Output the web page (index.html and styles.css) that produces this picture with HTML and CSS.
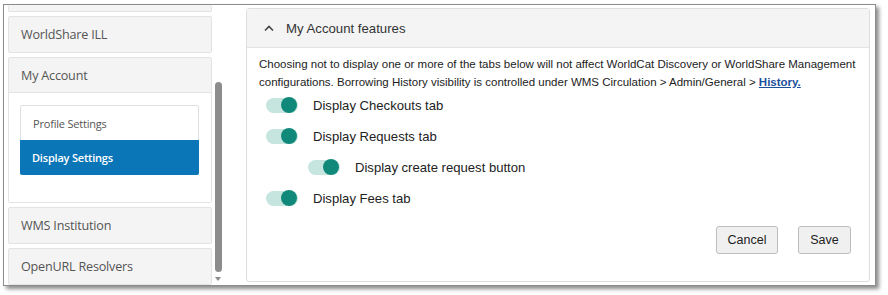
FILE: index.html
```html
<!DOCTYPE html>
<html>
<head>
<meta charset="utf-8">
<link rel="stylesheet" href="styles.css">
</head>
<body>
<div class="frame">
  <div class="sidebar">
    <div class="panels">
      <div class="panel panel-top"></div>
      <div class="panel"><div class="panel-head">WorldShare ILL</div></div>
      <div class="panel open">
        <div class="panel-head">My Account</div>
        <div class="panel-body">
          <div class="subnav">
            <div class="subitem">Profile Settings</div>
            <div class="subitem active">Display Settings</div>
          </div>
        </div>
      </div>
      <div class="panel"><div class="panel-head">WMS Institution</div></div>
      <div class="panel"><div class="panel-head">OpenURL Resolvers</div></div>
    </div>
    <div class="scrollbar">
      <div class="thumb"></div>
      <div class="arrow"></div>
    </div>
  </div>
  <div class="main">
    <div class="card">
      <div class="card-head">
        <svg class="chev" width="12" height="8" viewBox="0 0 12 8"><path d="M2 6.5 L6 2.5 L10 6.5" fill="none" stroke="#444" stroke-width="1.6"/></svg>
        <span class="card-title">My Account features</span>
      </div>
      <div class="card-body">
        <p class="desc">Choosing not to display one or more of the tabs below will not affect WorldCat Discovery or WorldShare Management configurations. Borrowing History visibility is controlled under WMS Circulation &gt; Admin/General &gt; <a class="link">History.</a></p>
        <div class="toggles">
          <div class="row"><span class="switch"><span class="knob"></span></span><span class="label">Display Checkouts tab</span></div>
          <div class="row"><span class="switch"><span class="knob"></span></span><span class="label">Display Requests tab</span></div>
          <div class="row sub"><span class="switch"><span class="knob"></span></span><span class="label">Display create request button</span></div>
          <div class="row"><span class="switch"><span class="knob"></span></span><span class="label">Display Fees tab</span></div>
        </div>
        <div class="actions">
          <button class="btn btn-cancel">Cancel</button>
          <button class="btn btn-save">Save</button>
        </div>
      </div>
    </div>
  </div>
</div>
</body>
</html>
```
FILE: styles.css
```css
* { box-sizing: border-box; }
html, body { margin: 0; padding: 0; background: #fff; }
body { width: 888px; height: 295px; overflow: hidden; }

.frame {
  margin: 4px 0 0 3px;
  width: 873px;
  height: 282px;
  border: 1px solid #8c8c8c;
  background: #fff;
  display: flex;
  overflow: hidden;
  box-shadow: 3px 3px 4px rgba(0,0,0,0.45);
}

.sidebar {
  width: 219px;
  display: flex;
  flex-shrink: 0;
}
.panels {
  width: 204px;
  margin-left: 4px;
  display: flex;
  flex-direction: column;
  gap: 4px;
  font-family: "Open Sans", "Noto Sans", sans-serif;
  color: #555;
}
.panel {
  background: #f4f4f4;
  border: 1px solid #e3e3e3;
  border-radius: 2px;
}
.panel-top { height: 8px; border-top: none; }
.panel-head {
  height: 35px;
  padding-left: 12px;
  display: flex;
  align-items: center;
  font-size: 12.6px;
  letter-spacing: -0.2px;
}
.panel.open .panel-head { border-bottom: 1px solid #e3e3e3; }
.panel-body {
  background: #fff;
  padding: 12px 12px 27px 11px;
}
.subnav {
  border: 1px solid #e0e0e0;
  border-radius: 2px;
}
.subitem {
  height: 34px;
  display: flex;
  align-items: center;
  padding-left: 12px;
  font-size: 11px;
  letter-spacing: -0.2px;
  color: #555;
}
.subitem.active {
  background: #0a76b7;
  color: #fff;
  font-weight: 600;
  height: 35px;
  margin: 0 -1px -1px -1px;
  border-radius: 0 0 2px 2px;
}

.scrollbar {
  width: 8px;
  margin-left: 2px;
  display: flex;
  flex-direction: column;
  align-items: center;
  padding-top: 77px;
}
.thumb {
  width: 7px;
  height: 190px;
  background: #8d8d8d;
  border-radius: 4px;
}
.arrow {
  margin-top: 5px;
  width: 0; height: 0;
  border-left: 3px solid transparent;
  border-right: 3px solid transparent;
  border-top: 4px solid #8d8d8d;
}

.main {
  flex: 1;
  padding: 3px 5px 3px 23px;
}
.card {
  height: 274px;
  border: 1px solid #dedede;
  border-radius: 3px;
  font-family: "Liberation Sans", Arial, sans-serif;
  color: #333;
  display: flex;
  flex-direction: column;
}
.card-head {
  height: 39px;
  background: #f4f4f4;
  border-bottom: 1px solid #e3e3e3;
  display: flex;
  align-items: center;
  padding-left: 16px;
  gap: 11px;
}
.chev { display: block; }
.card-title { font-size: 13.2px; color: #333; }
.card-body {
  padding: 7px 2px 0 12px;
  flex: 1;
  display: flex;
  flex-direction: column;
}
.desc {
  margin: 0;
  font-size: 11.5px;
  line-height: 18px;
  color: #222;
}
.link {
  color: #1d4f9b;
  font-weight: bold;
  text-decoration: underline;
}
.toggles {
  display: flex;
  flex-direction: column;
  gap: 13px;
  margin-top: 5px;
  padding-left: 7px;
}
.row {
  display: flex;
  align-items: center;
  height: 18px;
}
.row.sub { padding-left: 42px; }
.switch {
  width: 32px;
  height: 15px;
  border-radius: 8px;
  background: #c6e5df;
  position: relative;
  flex-shrink: 0;
}
.knob {
  position: absolute;
  right: 1px;
  top: -0.5px;
  width: 16px;
  height: 16px;
  border-radius: 50%;
  background: #11897a;
}
.label {
  margin-left: 15px;
  font-size: 13.1px;
  color: #222;
}
.actions {
  display: flex;
  justify-content: flex-end;
  gap: 20px;
  margin-top: 19px;
  padding-right: 16px;
}
.btn {
  height: 28px;
  padding: 0;
  background: #f0f0f0;
  border: 1px solid #bdbdbd;
  border-radius: 3px;
  font-family: "Liberation Sans", Arial, sans-serif;
  font-size: 12.5px;
  color: #222;
}
.btn-cancel { width: 62px; }
.btn-save { width: 53px; }
```
